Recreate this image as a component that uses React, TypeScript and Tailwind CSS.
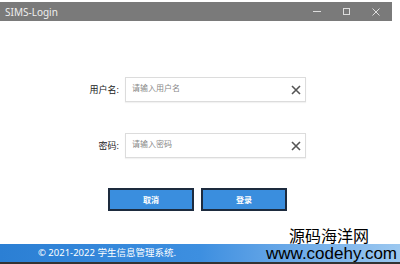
const X = () => (
  <svg width="10" height="10" viewBox="0 0 10 10" className="text-[#555]">
    <path d="M1 1 L9 9 M9 1 L1 9" stroke="currentColor" strokeWidth="1.6" fill="none" />
  </svg>
);

const Field = ({ label, placeholder }: { label: string; placeholder: string }) => (
  <div className="flex items-center">
    <span className="w-[125px] pr-[6px] text-right text-[9px] text-[#222]">{label}</span>
    <div className="flex h-[25px] w-[181px] items-center justify-between border border-[#dcdcdc] bg-white pl-[6px] pr-[4px] shadow-[0_1px_1px_rgba(0,0,0,0.05)]">
      <span className="-mt-[4px] text-[8px] text-[#888]">{placeholder}</span>
      <X />
    </div>
  </div>
);

export default function App() {
  return (
    <div
      className="flex h-[264px] w-[400px] flex-col overflow-hidden bg-white"
      style={{ fontFamily: '"Noto Sans", "Noto Sans CJK SC", sans-serif' }}
    >
      <div className="h-[2px] w-[392px] bg-white" />
      <div className="flex h-[19px] w-[392px] items-center justify-between bg-[#7a7a7a] pl-[5px] pr-[12px]">
        <span className="text-[10px] leading-none text-[#eee]">SIMS-Login</span>
        <div className="flex items-center gap-[22px] text-[#ddd]">
          <span className="block h-[1px] w-[8px] bg-[#ddd]" />
          <span className="block h-[7px] w-[7px] border border-[#ddd]" />
          <svg width="8" height="8" viewBox="0 0 8 8">
            <path d="M0.5 0.5 L7.5 7.5 M7.5 0.5 L0.5 7.5" stroke="#ddd" strokeWidth="1" />
          </svg>
        </div>
      </div>

      <div className="flex w-[392px] flex-1 flex-col pt-[56px]">
        <div className="flex flex-col gap-[31px]">
          <Field label="用户名:" placeholder="请输入用户名" />
          <Field label="密码:" placeholder="请输入密码" />
        </div>
        <div className="mt-[30px] flex gap-[7px] pl-[108px]">
          <button className="h-[23px] w-[86px] border-2 border-[#1d2b3e] bg-[#3a8ede] text-[8px] font-bold text-white">
            取消
          </button>
          <button className="h-[23px] w-[86px] border-2 border-[#1d2b3e] bg-[#3a8ede] text-[8px] font-bold text-white">
            登录
          </button>
        </div>
      </div>

      <div className="relative">
        <div className="flex h-[18px] items-center bg-gradient-to-r from-[#2b7fd4] via-[#3d8fe0] to-[#9cc8f0] pl-[38px]">
          <span className="text-[9.5px] text-white">© 2021-2022 学生信息管理系统.</span>
        </div>
        <div className="h-[2px] bg-[#333]" />
        <div className="absolute bottom-[2px] right-[3px] flex flex-col items-end text-black">
          <span className="mr-[28px] text-[16px] leading-[16px]">源码海洋网</span>
          <span
            className="mt-[1px] text-[17px] leading-[17px]"
            style={{ fontFamily: '"Liberation Sans", sans-serif' }}
          >
            www.codehy.com
          </span>
        </div>
      </div>
    </div>
  );
}
